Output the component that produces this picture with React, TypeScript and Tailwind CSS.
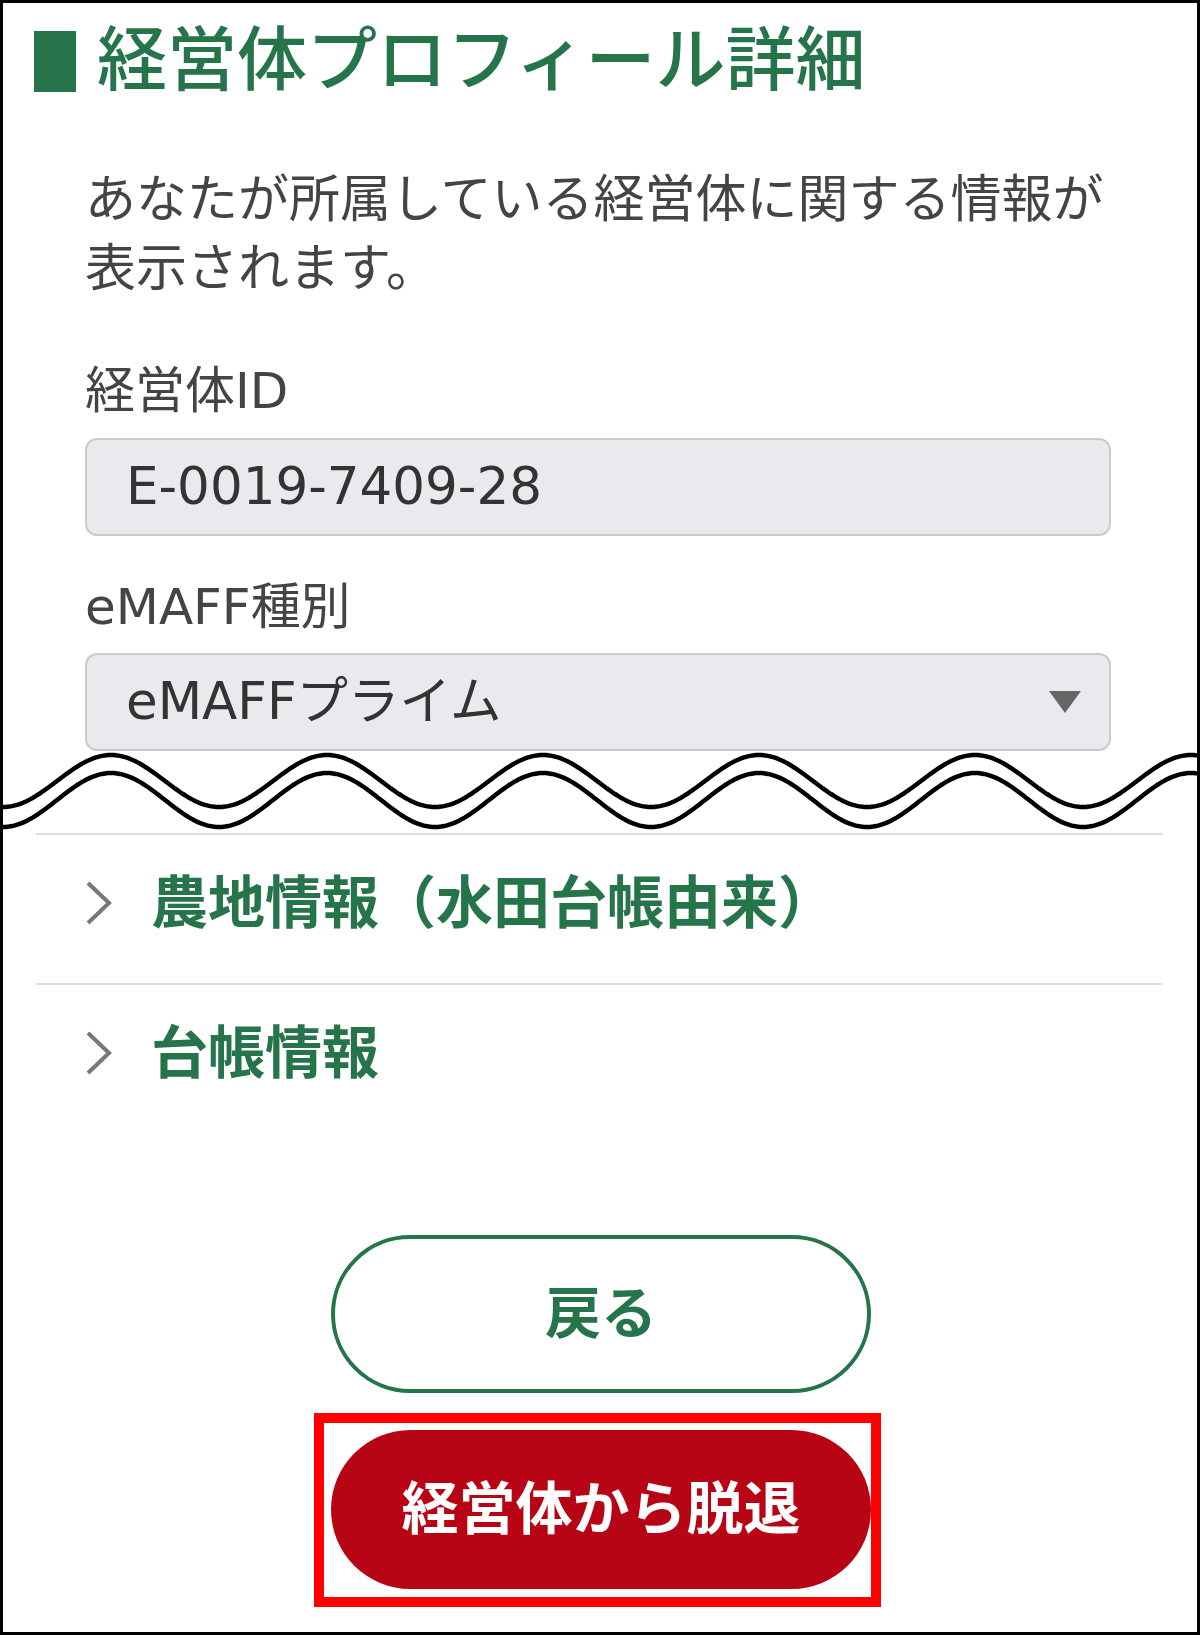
import React from 'react'

const GREEN = '#25744a'

function wavePath(mid: number, amp: number) {
  const pts: string[] = []
  for (let x = 0; x <= 1194; x += 3) {
    const y = mid - amp * Math.cos((2 * Math.PI * (x - 108)) / 216)
    pts.push(`${x === 0 ? 'M' : 'L'}${x},${y.toFixed(2)}`)
  }
  return pts.join(' ')
}

function Chevron() {
  return (
    <svg width="28" height="44" viewBox="0 0 28 44" className="shrink-0">
      <polyline points="3,2 24,22 3,42" fill="none" stroke="#777777" strokeWidth="4" />
    </svg>
  )
}

function AccordionRow({ title, divider }: { title: string; divider?: boolean }) {
  return (
    <div className={divider ? 'border-b-2 border-[#dddddd]' : ''}>
      <div className="flex items-center pl-[49px] pt-[28px] pb-[40px]">
        <Chevron />
        <span className="ml-[38px] text-[57px] leading-[80px] font-bold" style={{ color: GREEN }}>
          {title}
        </span>
      </div>
    </div>
  )
}

export default function App() {
  return (
    <div
      className="w-[1200px] h-[1635px] border-[3px] border-black bg-white overflow-hidden"
      style={{ fontFamily: '"DejaVu Sans", "Noto Sans CJK JP", sans-serif' }}
    >
      <div className="pl-[82px] pr-[86px]">
        {/* Heading */}
        <div className="flex items-center -ml-[51px] pt-[28px] h-[89px]">
          <div className="w-[42px] h-[61px] bg-[#25744a] shrink-0" />
          <h1 className="ml-[21px] text-[70px] leading-[61px] font-medium text-[#25744a] whitespace-nowrap">
            経営体プロフィール詳細
          </h1>
        </div>

        <p className="mt-[73px] text-[51px] leading-[69px] text-[#444444]">
          あなたが所属している経営体に関する情報が表示されます。
        </p>

        <div className="mt-[54px] text-[50px] leading-[69px] text-[#444444]">経営体ID</div>
        <div className="mt-[12px] h-[98px] rounded-[12px] border-2 border-[#cacbcd] bg-[#e9eaed] flex items-center pl-[39px] text-[51.5px] text-[#333333]">
          E-0019-7409-28
        </div>

        <div className="mt-[37px] text-[50px] leading-[69px] text-[#444444]">eMAFF種別</div>
        <div className="mt-[11px] h-[98px] rounded-[12px] border-2 border-[#cacbcd] bg-[#e9eaed] flex items-center justify-between pl-[39px] pr-[28px] text-[51.5px] text-[#333333]">
          <span>eMAFFプライム</span>
          <svg width="32" height="22" viewBox="0 0 32 22">
            <polygon points="0,0 32,0 16,22" fill="#666666" />
          </svg>
        </div>
      </div>

      {/* Cut marker */}
      <svg width="1194" height="82" viewBox="0 0 1194 82" className="block">
        <path d={wavePath(30, 26)} fill="none" stroke="#000" strokeWidth="4.5" />
        <path d={wavePath(49, 27)} fill="none" stroke="#000" strokeWidth="4.5" />
      </svg>

      {/* Accordions */}
      <div className="ml-[33px] mr-[34px] border-t-2 border-[#dddddd]">
        <AccordionRow title="農地情報（水田台帳由来）" divider />
        <AccordionRow title="台帳情報" />
      </div>

      {/* Buttons */}
      <button className="mt-[102px] ml-[328px] w-[540px] h-[158px] rounded-full border-4 border-[#25744a] bg-white flex items-center justify-center text-[56px] font-bold text-[#25744a]">
        戻る
      </button>
      <div className="mt-[20px] ml-[311px] w-[567px] border-[10px] border-[#ff0000] pl-[7px] pt-[7px] pb-[8px]">
        <button className="w-[540px] h-[159px] rounded-full bg-[#b80516] flex items-center justify-center text-[57px] font-bold text-white">
          経営体から脱退
        </button>
      </div>
    </div>
  )
}
